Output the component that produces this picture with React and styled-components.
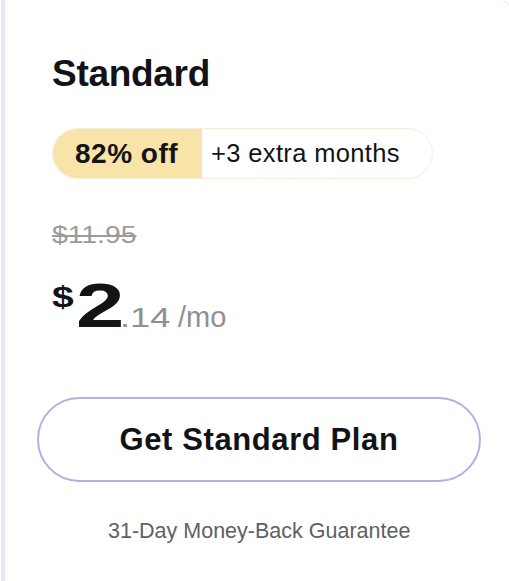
import React from "react";
import styled, { createGlobalStyle } from "styled-components";

const Global = createGlobalStyle`
  html, body { margin: 0; padding: 0; background: #ffffff; }
  body { font-family: "Liberation Sans", Arial, sans-serif; }
`;

const Page = styled.div`
  position: relative;
  width: 509px;
  height: 581px;
  box-sizing: border-box;
  background: #ffffff;
  overflow: hidden;
`;

const Card = styled.section`
  height: 100%;
  box-sizing: border-box;
  margin-left: 1px;
  border-left: 4px solid #e9e8f4;
  padding: 52px 0 0 47px;
  display: flex;
  flex-direction: column;
  align-items: flex-start;
`;

const CornerArc = styled.div`
  position: absolute;
  top: -30px;
  right: -30px;
  width: 38px;
  height: 36px;
  border: 1px solid #ececec;
  border-radius: 50%;
`;

const Title = styled.h2`
  margin: 0;
  font-size: 37px;
  line-height: 44px;
  font-weight: 700;
  letter-spacing: -0.3px;
  color: #111316;
`;

const Pill = styled.div`
  margin-top: 32px;
  display: flex;
  height: 51px;
  width: 381px;
  box-sizing: border-box;
  border: 1px solid #f4eed8;
  border-radius: 26px;
  overflow: hidden;
`;

const PillPart = styled.span`
  display: flex;
  align-items: center;
  padding: 0 ${(p) => (p.$accent ? "24px" : "10px")} 0 ${(p) => (p.$accent ? "22px" : "9px")};
  background: ${(p) => (p.$accent ? "#f8e3a9" : "#ffffff")};
  font-size: ${(p) => (p.$accent ? "28px" : "25.5px")};
  letter-spacing: ${(p) => (p.$accent ? "0.5px" : "0.35px")};
  font-weight: ${(p) => (p.$accent ? 700 : 400)};
  color: #141414;
  white-space: nowrap;
`;

const OldPrice = styled.s`
  display: inline-block;
  margin-top: 42px;
  font-size: 23px;
  line-height: 28px;
  color: #9b9b9b;
  transform: scaleX(1.23);
  transform-origin: left center;
`;

const PriceRow = styled.div`
  margin-top: 31px;
  display: flex;
  align-items: baseline;
  color: #121417;
`;

const Wide = styled.span`
  display: inline-block;
  transform: scaleX(${(p) => p.$sx});
  transform-origin: left center;
`;

const Currency = styled(Wide)`
  align-self: flex-start;
  margin-top: 2px;
  margin-right: 7.6px;
  font-size: 30px;
  line-height: 30px;
  font-weight: 700;
`;

const Amount = styled(Wide)`
  font-size: 63px;
  line-height: 50px;
  font-weight: 700;
  margin-right: 8.4px;
`;

const Fraction = styled(Wide)`
  font-size: 28px;
  color: #8d9196;
  margin-right: 19.4px;
`;

const Period = styled.span`
  font-size: 29px;
  color: #8d9196;
`;

const CtaButton = styled.button`
  margin: 63px 0 0 -15px;
  width: 444px;
  height: 85px;
  box-sizing: border-box;
  border: 2px solid #b7ade3;
  border-radius: 43px;
  background: #ffffff;
  font-family: "Liberation Sans", Arial, sans-serif;
  font-size: 31px;
  letter-spacing: 0.6px;
  font-weight: 700;
  color: #111316;
  cursor: pointer;
`;

const Guarantee = styled.p`
  margin: 36px 0 0 56px;
  font-size: 21.5px;
  line-height: 26px;
  color: #5d6166;
`;

export default function App() {
  return (
    <Page>
      <Global />
      <CornerArc />
      <Card>
        <Title>Standard</Title>
        <Pill>
          <PillPart $accent>82% off</PillPart>
          <PillPart>+3 extra months</PillPart>
        </Pill>
        <OldPrice>$11.95</OldPrice>
        <PriceRow>
          <Currency $sx={1.3}>$</Currency>
          <Amount $sx={1.38}>2</Amount>
          <Fraction $sx={1.3}>.14</Fraction>
          <Period>/mo</Period>
        </PriceRow>
        <CtaButton>Get Standard Plan</CtaButton>
        <Guarantee>31-Day Money-Back Guarantee</Guarantee>
      </Card>
    </Page>
  );
}
